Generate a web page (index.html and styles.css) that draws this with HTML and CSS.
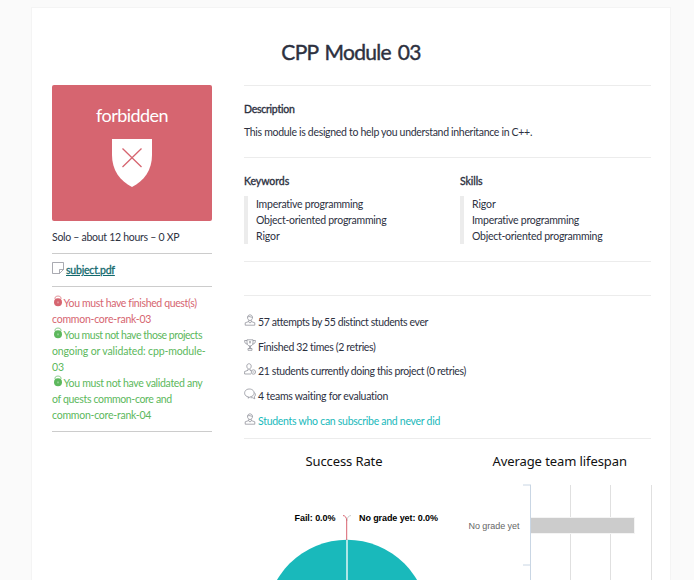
FILE: index.html
```html
<!DOCTYPE html>
<html lang="en">
<head>
<meta charset="utf-8">
<title>CPP Module 03</title>
<link rel="stylesheet" href="styles.css">
</head>
<body>
<svg width="0" height="0" class="defs">
  <symbol id="student" viewBox="0 0 12 12"><path d="M3.5 3.5C3.5 0 8.500 0 8.500 3.500C8.500 5 7.500 6.500 6 6.500S3.500 5 3.500 3.500ZM3.500 3.200L5 2.500 8.500 3.400M4.800 6.300V7.500L1.200 8.800V11.200H10.800V8.800L7.200 7.500V6.300M4.500 7.800L6 9 7.500 7.800"/></symbol>
  <symbol id="lock" viewBox="0 0 12 12"><path d="M3 4V3C3 .4 9 .4 9 3V4" fill="none" stroke="currentColor" stroke-width=".7"/><circle cx="6" cy="7.300" r="4" fill="currentColor"/><path d="M6 6.500V8.300" stroke="#fff" stroke-width=".6"/></symbol>
</svg>
<main class="page">
  <h1><span>CPP Module 03</span></h1>
  <div class="columns">
    <aside>
      <div class="status">
        <span class="status-text">forbidden</span>
        <svg width="42" height="50" viewBox="0 0 42 50"><path d="M1 1H41V17C41 32 33 43 21 49C9 43 1 32 1 17Z" fill="#fff"/><path d="M11.500 10.500L30.500 29M30.500 10.500L11.500 29" stroke="#d66570" stroke-width="1.300"/></svg>
      </div>
      <p class="info"><span class="t1">Solo – about 12 hours – 0 XP</span></p>
      <p class="file"><svg class="icon" viewBox="0 0 12 12"><path d="M.5 .5H11.500V7.500L7.500 11.500H.5ZM7.500 11.500V7.500H11.500"/></svg><a class="t2">subject.pdf</a></p>
      <div class="rules">
        <p class="bad"><svg class="lock"><use href="#lock"/></svg><span class="r1">You must have finished quest(s)</span><br><span class="r2">common-core-rank-03</span></p>
        <p class="good"><svg class="lock"><use href="#lock"/></svg><span class="r3">You must not have those projects</span><br><span class="r4">ongoing or validated: cpp-module-</span><br><span class="r5">03</span></p>
        <p class="good"><svg class="lock"><use href="#lock"/></svg><span class="r6">You must not have validated any</span><br><span class="r7">of quests common-core and</span><br><span class="r2">common-core-rank-04</span></p>
      </div>
    </aside>
    <div class="content">
      <section class="description"><h2><span class="h-desc">Description</span></h2><p><span class="d1">This module is designed to help you understand inheritance in C++.</span></p></section>
      <section class="tags">
        <div><h2><span class="h-key">Keywords</span></h2><ul><li class="k1">Imperative programming</li><li class="k2">Object-oriented programming</li><li class="k3">Rigor</li></ul></div>
        <div><h2><span class="h-skill">Skills</span></h2><ul><li class="k3">Rigor</li><li class="k1">Imperative programming</li><li class="k2">Object-oriented programming</li></ul></div>
      </section>
      <section class="spacer"></section>
      <section class="stats">
        <p><svg class="icon"><use href="#student"/></svg><span class="s1">57 attempts by 55 distinct students ever</span></p>
        <p><svg class="icon" viewBox="0 0 12 12"><path d="M3 .8H9V4C9 8 3 8 3 4ZM3 1.500H.6C.6 4 1.500 5 3.500 5M9 1.500H11.400C11.400 4 10.500 5 8.500 5M5.500 7V9.500M6.500 7V9.500M4 9.500H8V11.300H4ZM5 3H7M6 2V4.500"/></svg><span class="s2">Finished 32 times (2 retries)</span></p>
        <p><svg class="icon" viewBox="0 0 12 12"><path d="M2.800 3C2.800 0 7.200 0 7.200 3C7.200 5 6.200 6 5 6S2.800 5 2.800 3ZM4 6V7.300L.6 8.500V11H7M6 6V7.300L7.500 7.800"/><circle cx="9.400" cy="9" r="2.200"/><path d="M8.400 9H10.400"/></svg><span class="s3">21 students currently doing this project (0 retries)</span></p>
        <p><svg class="icon" viewBox="0 0 12 12"><path d="M4.500 8.800C-1 8.500-.5 1 5.200 1C11.500 1 11.500 8.200 6.500 8.700L4 10.200ZM10.300 4.500C12 6 11.500 8 10.300 8.800L10.800 10.800 8.500 9.700H6.500"/></svg><span class="s4">4 teams waiting for evaluation</span></p>
        <p><svg class="icon"><use href="#student"/></svg><a class="s5">Students who can subscribe and never did</a></p>
      </section>
      <section class="charts">
        <svg width="408" height="141" viewBox="244 439 408 141">
          <g class="chart-title"><text x="305.500" y="466" textLength="77">Success Rate</text><text x="492.500" y="466" textLength="134.500">Average team lifespan</text></g>
          <g class="pie-label"><text x="294.500" y="521" textLength="41">Fail: 0.0%</text><text x="359" y="521" textLength="79">No grade yet: 0.0%</text></g>
          <circle cx="347" cy="621" r="81.200" fill="#19b9bb"/>
          <path d="M347 540V580" stroke="#fff" stroke-width="1.300"/>
          <path d="M351 515.500Q347 516 347 521" fill="none" stroke="#ccc"/>
          <path d="M343 515.500Q346.700 516 346.700 521V540" fill="none" stroke="#d8636f"/>
          <path d="M570.500 485V580M610.500 485V580M651.500 485V580" stroke="#e0e0e0"/>
          <rect x="530.500" y="517.500" width="104" height="16" fill="#ccc" stroke="#f4f4f4"/>
          <path d="M530.500 485V580M523 485H531M523 565H531" fill="none" stroke="#c9d6e4"/>
          <text class="axis-label" x="468.500" y="529" textLength="51">No grade yet</text>
        </svg>
      </section>
    </div>
  </div>
</main>
</body>
</html>
```
FILE: styles.css
```css
* { box-sizing: border-box; }
body { margin: 0; background: #fafafa; color: #2d313f; font: 10.5px/16px Lato, "Liberation Sans", sans-serif; height: 580px; overflow: hidden; }
h1, h2, p, ul { margin: 0; padding: 0; font-weight: normal; }
.defs { display: block; height: 0; }
.page { width: 640px; height: 600px; margin: 7px 0 0 31px; padding: 0 20px; background: #fff; border: 1px solid #f4f4f4; }
h1 { height: 77px; padding-top: 30px; font-size: 21px; line-height: 28px; text-align: center; letter-spacing: -.7px; word-spacing: 2px; -webkit-text-stroke: .4px; }
.columns { display: flex; gap: 32px; }
aside { flex: none; width: 160px; }
.content { flex: none; width: 407px; }
span, a, li { white-space: nowrap; }
.status { display: flex; flex-direction: column; align-items: center; height: 136px; padding-top: 18px; border-radius: 2px; background: #d66570; color: #fff; }
.status-text { height: 35px; font-size: 18px; line-height: 25px; letter-spacing: -.55px; }
.info { height: 33px; padding-top: 8px; border-bottom: 1px solid #ccc; }
.file { height: 33px; padding-top: 8px; border-bottom: 1px solid #ccc; }
.file a { color: #12696d; text-decoration: underline; -webkit-text-stroke: .3px; }
.rules { height: 145px; padding-top: 8px; border-bottom: 1px solid #ccc; }
.rules p { white-space: nowrap; }
.bad { color: #d66570; }
.good { color: #5cb85c; }
.lock { width: 12px; height: 12px; margin-right: -.5px; vertical-align: 0; }
.icon { width: 12px; height: 12px; margin-right: 2px; vertical-align: 0; fill: none; stroke: #858690; stroke-width: .7; }
section { border-top: 1px solid #ececec; }
h2 { font-size: 10.5px; line-height: 16px; -webkit-text-stroke: .35px; }
.description { height: 72px; padding-top: 15px; }
.description p { padding-top: 7px; }
.tags { display: flex; height: 104px; padding-top: 15px; }
.tags > div { flex: none; width: 216px; }
ul { list-style: none; margin-top: 7px; padding-left: 8px; border-left: 4px solid #ececec; }
.spacer { height: 34px; }
.stats { height: 143px; padding-top: 18px; }
.stats p { height: 24.7px; }
.stats a { color: #19b9bb; }

/* Per-line tracking */
.t1 { letter-spacing: -.28px; }
.t2 { letter-spacing: -.2px; }
.r1 { letter-spacing: -.36px; }
.r2 { letter-spacing: -.24px; }
.r3 { letter-spacing: -.46px; }
.r4 { letter-spacing: -.12px; }
.r6 { letter-spacing: -.31px; }
.r7 { letter-spacing: -.34px; }
.d1 { letter-spacing: -.31px; }
.h-desc { letter-spacing: -.25px; }
.h-key { letter-spacing: -.05px; }
.h-skill { letter-spacing: -.07px; }
.k1 { letter-spacing: -.25px; }
.k2 { letter-spacing: -.26px; }
.k3 { letter-spacing: -.1px; }
.s1 { letter-spacing: -.4px; }
.s2 { letter-spacing: -.34px; }
.s3 { letter-spacing: -.37px; }
.s4 { letter-spacing: -.28px; }
.s5 { letter-spacing: -.28px; }

.charts svg { display: block; }
.chart-title { font: 13px "Noto Sans", sans-serif; fill: #111; }
.pie-label { font: bold 9px "Liberation Sans", sans-serif; fill: #000; }
.axis-label { font: 9px "Liberation Sans", sans-serif; fill: #666; }
```
